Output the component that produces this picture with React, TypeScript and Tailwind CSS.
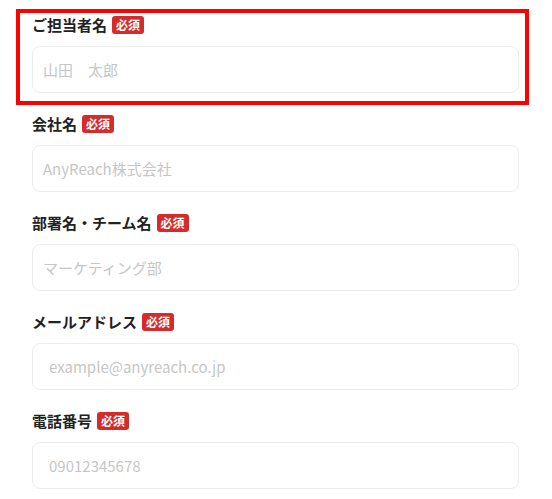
import React from 'react';

type Field = {
    label: string;
    placeholder: string;
    type?: string;
    wide?: boolean;
};

const fields: Field[] = [
    { label: 'ご担当者名', placeholder: '山田　太郎' },
    { label: '会社名', placeholder: 'AnyReach株式会社' },
    { label: '部署名・チーム名', placeholder: 'マーケティング部' },
    { label: 'メールアドレス', placeholder: 'example@anyreach.co.jp', type: 'email', wide: true },
    { label: '電話番号', placeholder: '09012345678', type: 'tel', wide: true },
];

function FormField({ field, highlight }: { field: Field; highlight?: boolean }) {
    return (
        <div className="relative flex flex-col gap-[11px]">
            {highlight && (
                <div className="pointer-events-none absolute -top-[6px] -right-[10px] -bottom-[12px] -left-[16px] border-4 border-[#ff0000]" />
            )}
            <div className="flex h-[20px] items-center gap-[5px]">
                <span className="text-[15px] font-bold text-[#222]">{field.label}</span>
                <span className="rounded-[3px] bg-[#d42b2b] px-[4px] text-[12px] leading-[18px] font-bold text-white">
                    必須
                </span>
            </div>
            <input
                type={field.type ?? 'text'}
                placeholder={field.placeholder}
                className={
                    field.wide
                        ? 'h-[47px] w-full rounded-lg border border-[#ededed] bg-white px-[16px] text-[15px] placeholder:text-[#c6c6c6] focus:outline-none'
                        : 'h-[47px] w-full rounded-lg border border-[#ededed] bg-white px-[10px] text-[15px] placeholder:text-[#c6c6c6] focus:outline-none'
                }
            />
        </div>
    );
}

export default function App() {
    return (
        <div
            className="min-h-screen bg-white pt-[15px] pr-[33px] pl-[32px]"
            style={{ fontFamily: '"Noto Sans CJK JP", "Noto Sans", sans-serif' }}
        >
            <div className="flex flex-col gap-[21px]">
                {fields.map((f, i) => (
                    <FormField key={f.label} field={f} highlight={i === 0} />
                ))}
            </div>
        </div>
    );
}
